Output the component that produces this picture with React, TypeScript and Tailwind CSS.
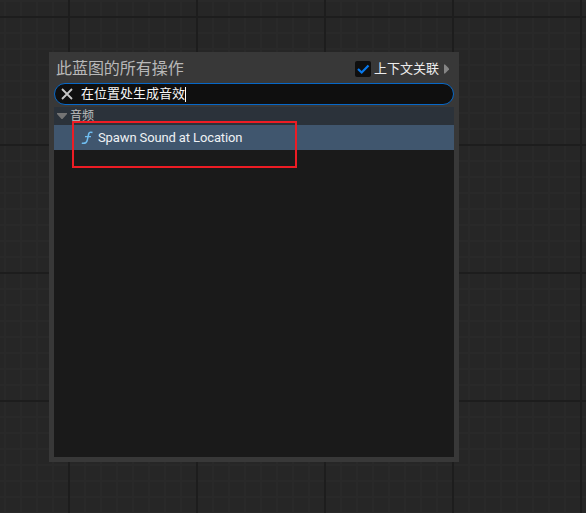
const GRID = [
  'linear-gradient(90deg,#1d1d1d 2px,transparent 2px)',
  'linear-gradient(#1d1d1d 2px,transparent 2px)',
  'linear-gradient(90deg,#292929 2px,transparent 2px)',
  'linear-gradient(#292929 2px,transparent 2px)',
].join(',');

function Header() {
  return (
    <div className="flex h-[31px] items-center pl-[2px] pr-[4px] pt-[3px]">
      <span className="text-[16px] leading-[22px] tracking-[-0.05px] text-[#b8b8b8]">此蓝图的所有操作</span>
      <span className="ml-auto flex size-4 items-center justify-center rounded-[2px] bg-[#0f0f0f]">
        <svg width="16" height="16" viewBox="0 0 16 16" fill="none" stroke="#0879ed" strokeWidth="2.2">
          <path d="M3 8l3.7 3.5L13.5 4.5" />
        </svg>
      </span>
      <span className="ml-[3px] text-[13px] leading-[20px] text-[#ececec]">上下文关联</span>
      <svg className="ml-1" width="7" height="10" viewBox="0 0 7 10" fill="#858585">
        <path d="M1 .5h1L6 4.5v1L2 9.5H1z" />
      </svg>
    </div>
  );
}

function Search() {
  return (
    <div className="flex h-[22px] items-center rounded-full border border-[#0768c8] bg-[#0f0f0f] pl-[6px]">
      <svg width="12" height="12" viewBox="0 0 12 12" stroke="#c8c8c8" strokeWidth="1.8">
        <path d="M1 1l10 10M11 1L1 11" />
      </svg>
      <span className="ml-2 text-[13px] leading-[20px] text-[#f5f5f5]">在位置处生成音效</span>
      <span className="h-[15px] w-px bg-white" />
    </div>
  );
}

export default function App() {
  return (
    <div
      className="h-[513px] w-[586px] overflow-hidden bg-[#262626] bg-[length:128px_128px,128px_128px,16px_16px,16px_16px] bg-[position:68px_0,0_16px,4px_0,0_0] pl-[49px] pt-[52px] font-['Roboto','Noto_Sans_CJK_SC',sans-serif]"
      style={{ backgroundImage: GRID }}
    >
      <div className="flex h-[410px] w-[410px] flex-col bg-[#383838] px-[5px] pb-[5px]">
        <Header />
        <Search />
        <div className="relative mt-[2px] flex-1 bg-[#1a1a1a]">
          <div className="flex h-[18px] items-center bg-[#2b323a] pl-[3px]">
            <svg width="10" height="7" viewBox="0 0 10 7" fill="#747474">
              <path d="M0 0h10v1L5.5 6h-1L0 1z" />
            </svg>
            <span className="ml-[3px] text-[12px] leading-[18px] text-[#bebebe]">音频</span>
          </div>
          <div className="flex h-[25px] items-center bg-[#40566e] pl-[27px]">
            <svg width="13" height="15" viewBox="0 0 13 15" fill="none" stroke="#6fbdf0">
              <path strokeWidth="1.5" d="M7.8 3.5L6.2 10.3C5.7 12.6 4 13.8 .8 13.2" />
              <path strokeWidth="1.4" d="M7.6 4.2C8 2.4 9.2 1.9 11.5 2.5M4 6.6h6" />
            </svg>
            <span className="ml-1 text-[13px] leading-[20px] tracking-[-0.12px] text-[#eef1f4]">Spawn Sound at Location</span>
          </div>
          <div className="absolute left-[18px] top-[14px] h-[47px] w-[225px] border-2 border-[#ed1c24]" />
        </div>
      </div>
    </div>
  );
}
